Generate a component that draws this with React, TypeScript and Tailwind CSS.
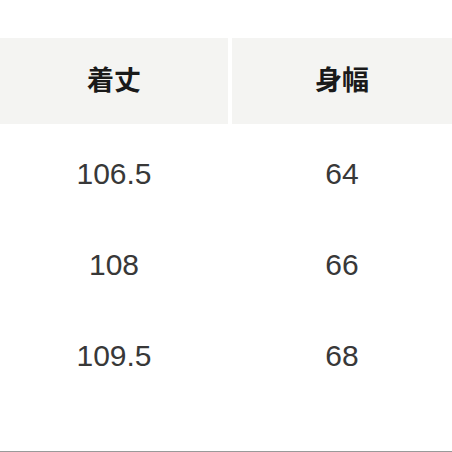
import React from 'react';

const rows = [
  ['106.5', '64'],
  ['108', '66'],
  ['109.5', '68'],
];

const App: React.FC = () => {
  return (
    <div
      className="w-[452px] h-[452px] bg-white flex flex-col border-b border-[#9a9a9a]"
      style={{ fontFamily: '"Liberation Sans", "Noto Sans CJK JP", sans-serif' }}
    >
      <div className="mt-[38px] grid grid-cols-[228px_220px] gap-x-[4px] gap-y-[4px]">
        <div className="h-[86px] bg-[#f4f4f2] flex items-center justify-center text-[27px] font-bold text-[#1a1a1a]">
          着丈
        </div>
        <div className="h-[86px] bg-[#f4f4f2] flex items-center justify-center text-[27px] font-bold text-[#1a1a1a]">
          身幅
        </div>
        {rows.map((r, idx) => (
          <React.Fragment key={idx}>
            <div className="h-[87px] flex items-center justify-center text-[30px] text-[#383838] pt-[3px]">
              {r[0]}
            </div>
            <div className="h-[87px] flex items-center justify-center text-[30px] text-[#383838] pt-[3px]">
              {r[1]}
            </div>
          </React.Fragment>
        ))}
      </div>
    </div>
  );
};

export default App;
